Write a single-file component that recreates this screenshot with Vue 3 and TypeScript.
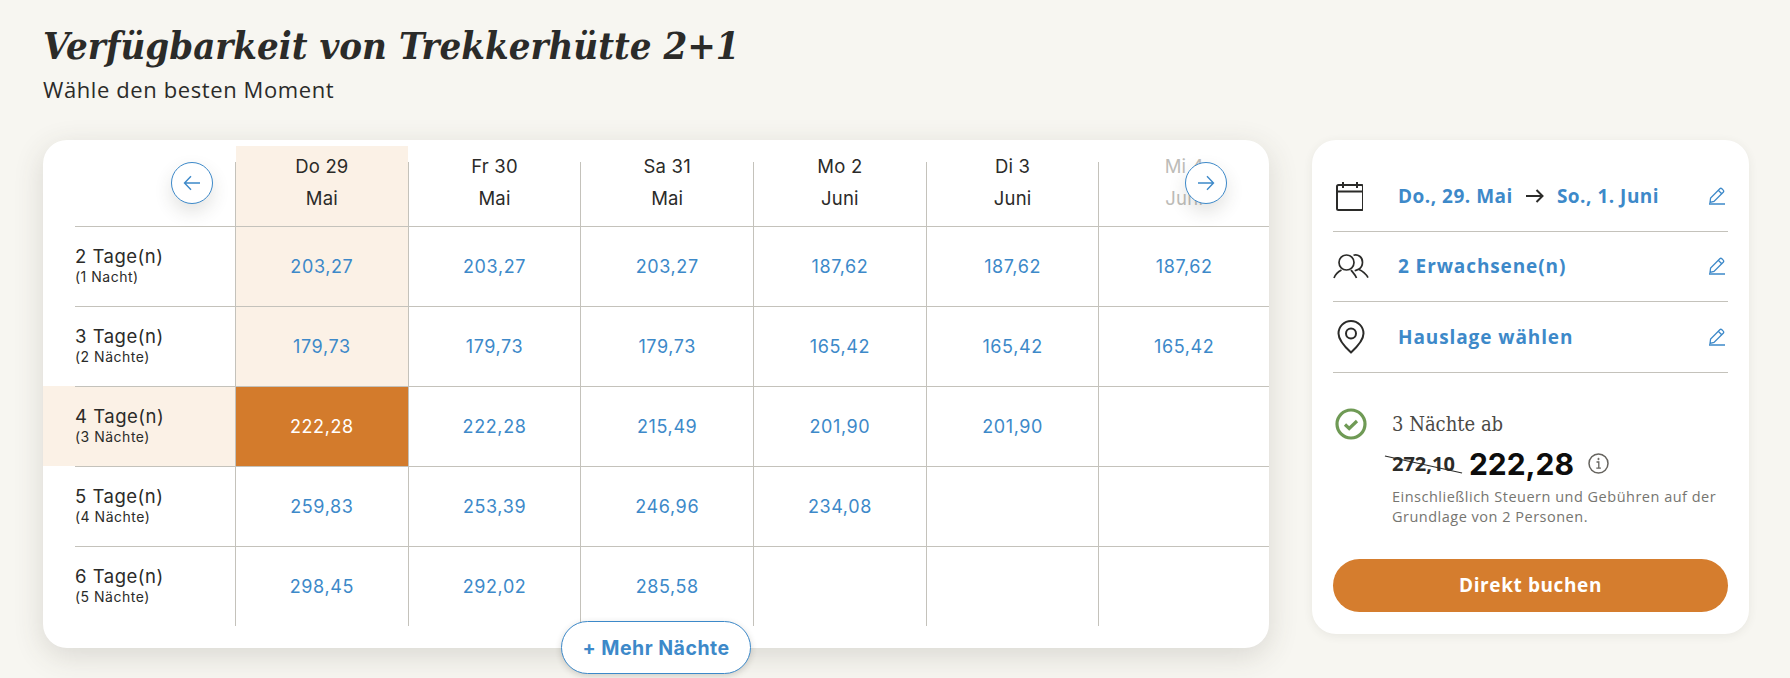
<template>
  <div class="page">
    <header class="page-head">
      <h1>Verfügbarkeit von Trekkerhütte 2+1</h1>
      <p>Wähle den besten Moment</p>
    </header>

    <div class="content">
      <section class="table-card">
        <div class="grid">
          <div class="corner"></div>
          <div
            v-for="(col, i) in columns"
            :key="col.day"
            class="head-cell"
            :class="{ active: i === 0, faded: i === 5 }"
          >
            <span>{{ col.day }}</span>
            <span>{{ col.month }}</span>
          </div>

          <template v-for="(row, r) in rows" :key="row.days">
            <div class="label-cell" :class="{ active: r === 2 }">
              <span class="days">{{ row.days }}</span>
              <span class="nights">{{ row.nights }}</span>
            </div>
            <div
              v-for="c in 6"
              :key="c"
              class="price-cell"
              :class="{ active: c === 1 && r < 2, selected: c === 1 && r === 2 }"
            >
              {{ row.prices[c - 1] }}
            </div>
          </template>
        </div>

        <button class="nav-btn prev" aria-label="Zurück">
          <svg width="18" height="18" viewBox="0 0 18 18" fill="none" stroke="currentColor" stroke-width="1.4">
            <path d="M1.5 9H17M8 2.2 1.5 9 8 15.8" />
          </svg>
        </button>
        <button class="nav-btn next" aria-label="Weiter">
          <svg width="18" height="18" viewBox="0 0 18 18" fill="none" stroke="currentColor" stroke-width="1.4">
            <path d="M16.5 9H1M10 2.2 16.5 9 10 15.8" />
          </svg>
        </button>
        <button class="more-btn">+ Mehr Nächte</button>
      </section>

      <aside class="side-card">
        <div class="side-row">
          <span class="side-icon">
            <svg width="30" height="30" viewBox="0 0 30 30" fill="none" stroke="#2b2b29" stroke-width="2">
              <rect x="4" y="4" width="26" height="25" rx="1.500" />
              <path d="M4 10.500h26M10 1v6M24 1v6" />
            </svg>
          </span>
          <span class="side-text date">Do., 29. Mai</span>
          <svg class="date-arrow" width="18" height="14" viewBox="0 0 18 14" fill="none" stroke="#2b2b29" stroke-width="2">
            <path d="M0 7h16.500M10.500 1l6 6-6 6" />
          </svg>
          <span class="side-text date">So., 1. Juni</span>
          <svg class="pencil" width="18" height="18" viewBox="0 0 18 18" fill="none" stroke="currentColor" stroke-width="1.3">
            <path d="M1 17h16M2 15.500l.6-4.500L11.800 1.800a1.500 1.500 0 0 1 2.100 0l1.300 1.300a1.500 1.500 0 0 1 0 2.100L6 14.500ZM10.300 3.300l3.900 3.900" />
          </svg>
        </div>
        <div class="side-row">
          <span class="side-icon">
            <svg width="36" height="25" viewBox="0 0 36 25" fill="none" stroke="#2b2b29" stroke-width="1.7">
              <circle cx="13.500" cy="8.500" r="7.500" />
              <path d="M1 24c1.500-4 5-6.800 7.500-8M23.500 24c-1.300-3.500-4.500-6.500-5.500-8M20.500 1.200c4.500-1.300 9 1.800 9 7 0 3.500-2 6-4 7 3.500 1.500 7.500 4.500 9.500 8.500M25.500 15.300c-1 .5-2 1-3.800 1.500" />
            </svg>
          </span>
          <span class="side-text">2 Erwachsene(n)</span>
          <svg class="pencil" width="18" height="18" viewBox="0 0 18 18" fill="none" stroke="currentColor" stroke-width="1.3">
            <path d="M1 17h16M2 15.500l.6-4.500L11.800 1.800a1.500 1.500 0 0 1 2.100 0l1.300 1.300a1.500 1.500 0 0 1 0 2.100L6 14.500ZM10.300 3.300l3.900 3.900" />
          </svg>
        </div>
        <div class="side-row">
          <span class="side-icon">
            <svg width="36" height="34" viewBox="0 0 36 34" fill="none" stroke="#2b2b29" stroke-width="2">
              <path d="M18 32.500C12 27 5.500 20 5.500 13.500a12.500 12.500 0 0 1 25 0C30.500 20 24 27 18 32.500Z" />
              <circle cx="18" cy="13.500" r="5" />
            </svg>
          </span>
          <span class="side-text">Hauslage wählen</span>
          <svg class="pencil" width="18" height="18" viewBox="0 0 18 18" fill="none" stroke="currentColor" stroke-width="1.3">
            <path d="M1 17h16M2 15.500l.6-4.500L11.800 1.800a1.500 1.500 0 0 1 2.100 0l1.300 1.300a1.500 1.500 0 0 1 0 2.100L6 14.500ZM10.300 3.300l3.900 3.900" />
          </svg>
        </div>

        <div class="summary">
          <svg class="check" width="32" height="32" viewBox="0 0 32 32" fill="none">
            <circle cx="16" cy="16" r="14" stroke="#6f9a55" stroke-width="3.200" />
            <path d="M10 16.500l4.200 4 7.800-7.500" stroke="#6f9a55" stroke-width="3.200" />
          </svg>
          <div class="summary-body">
            <p class="from">3 Nächte ab</p>
            <div class="price-line">
              <span class="old-price">272,10</span>
              <span class="new-price">222,28</span>
              <svg class="info" width="21" height="21" viewBox="0 0 21 21" fill="none" stroke="#66645f">
                <circle cx="10.500" cy="10.500" r="9.500" stroke-width="1.500" />
                <path d="M8.500 9h2.300v6M8.300 15.200h4.600" stroke-width="1.300" />
                <circle cx="10.500" cy="6" r=".7" fill="#66645f" stroke-width="1" />
              </svg>
            </div>
            <p class="note">Einschließlich Steuern und Gebühren auf der Grundlage von 2 Personen.</p>
          </div>
        </div>

        <button class="book-btn">Direkt buchen</button>
      </aside>
    </div>
  </div>
</template>

<script setup lang="ts">
interface Column {
  day: string
  month: string
}

interface Row {
  days: string
  nights: string
  prices: string[]
}

const columns: Column[] = [
  { day: 'Do 29', month: 'Mai' },
  { day: 'Fr 30', month: 'Mai' },
  { day: 'Sa 31', month: 'Mai' },
  { day: 'Mo 2', month: 'Juni' },
  { day: 'Di 3', month: 'Juni' },
  { day: 'Mi 4', month: 'Juni' }
]

const rows: Row[] = [
  { days: '2 Tage(n)', nights: '(1 Nacht)', prices: ['203,27', '203,27', '203,27', '187,62', '187,62', '187,62'] },
  { days: '3 Tage(n)', nights: '(2 Nächte)', prices: ['179,73', '179,73', '179,73', '165,42', '165,42', '165,42'] },
  { days: '4 Tage(n)', nights: '(3 Nächte)', prices: ['222,28', '222,28', '215,49', '201,90', '201,90'] },
  { days: '5 Tage(n)', nights: '(4 Nächte)', prices: ['259,83', '253,39', '246,96', '234,08'] },
  { days: '6 Tage(n)', nights: '(5 Nächte)', prices: ['298,45', '292,02', '285,58'] }
]
</script>

<style scoped>
.page {
  box-sizing: border-box;
  width: 1790px;
  height: 678px;
  padding: 21px 41px 0 43px;
  background: #f7f6f1;
  color: #2b2b29;
  font-family: "Open Sans", sans-serif;
  overflow: hidden;
}

.page-head h1 {
  margin: 0;
  font-family: "DejaVu Serif Condensed", "DejaVu Serif", serif;
  font-size: 38px;
  font-style: italic;
  font-weight: 700;
  line-height: 50px;
}

.page-head p {
  margin: 4px 0 0;
  font-size: 22px;
  line-height: 28px;
  letter-spacing: 0.6px;
}

.content {
  display: flex;
  align-items: flex-start;
  gap: 43px;
  margin-top: 37px;
}

.table-card {
  position: relative;
  box-sizing: border-box;
  width: 1226px;
  height: 508px;
  padding: 6px 0 22px 32px;
  background: #fff;
  border-radius: 24px;
  box-shadow: 0 8px 30px rgba(70, 65, 50, 0.16);
}

.grid {
  display: grid;
  grid-template-columns: 160px repeat(5, 172.700px) 1fr;
  grid-auto-rows: 80px;
  font-family: Inter, sans-serif;
}

.head-cell {
  position: relative;
  display: flex;
  flex-direction: column;
  align-items: center;
  box-sizing: border-box;
  padding-top: 4px;
  border-left: 1px solid transparent;
  background-clip: padding-box;
  font-size: 18.500px;
  line-height: 32px;
  letter-spacing: 0.2px;
}

.head-cell::before {
  content: "";
  position: absolute;
  top: 16px;
  bottom: 0;
  left: -1px;
  width: 1px;
  background: #c4c2bb;
}

.head-cell.active {
  background-color: #fbf1e6;
}

.head-cell.faded {
  color: #bdbcb8;
}

.label-cell {
  display: flex;
  flex-direction: column;
  justify-content: center;
  box-sizing: border-box;
  padding-bottom: 4px;
  border-top: 1px solid #c4c2bb;
}

.label-cell.active {
  background: #fbf1e6;
  box-shadow: -32px 0 0 #fbf1e6;
}

.days {
  font-size: 18.500px;
  line-height: 23px;
  letter-spacing: 0.5px;
}

.nights {
  font-size: 14px;
  line-height: 17px;
  letter-spacing: 0.5px;
}

.price-cell {
  display: flex;
  align-items: center;
  justify-content: center;
  box-sizing: border-box;
  border-top: 1px solid #c4c2bb;
  border-left: 1px solid #c4c2bb;
  color: #3d89c9;
  font-size: 18px;
  letter-spacing: 0.6px;
}

.price-cell.active {
  background: #fbf1e6;
}

.price-cell.selected {
  background: #d37b2c;
  color: #fff;
}

.nav-btn {
  position: absolute;
  top: 22px;
  display: flex;
  align-items: center;
  justify-content: center;
  width: 42px;
  height: 42px;
  padding: 0;
  background: #fff;
  border: 1px solid #3d89c9;
  border-radius: 50%;
  box-shadow: 0 8px 18px rgba(60, 55, 40, 0.14);
  color: #3d89c9;
}

.nav-btn.prev {
  left: 128px;
}

.nav-btn.next {
  right: 42px;
}

.more-btn {
  position: absolute;
  bottom: -26px;
  left: 518px;
  width: 190px;
  height: 53px;
  padding: 0;
  background: #fff;
  border: 1px solid #3d89c9;
  border-radius: 27px;
  box-shadow: 0 2px 6px rgba(60, 55, 40, 0.2);
  color: #3d89c9;
  font-family: Inter, sans-serif;
  font-size: 19.500px;
  font-weight: 700;
  letter-spacing: 0.5px;
}

.side-card {
  box-sizing: border-box;
  width: 437px;
  height: 494px;
  padding: 21px 21px 22px;
  background: #fff;
  border-radius: 24px;
  box-shadow: 0 2px 10px rgba(70, 65, 50, 0.08);
}

.side-row {
  display: flex;
  align-items: center;
  box-sizing: border-box;
  height: 70.500px;
  border-bottom: 1px solid #c4c2bb;
  color: #3d89c9;
}

.side-icon {
  display: flex;
  flex: none;
  align-items: center;
  width: 65px;
}

.side-text {
  font-size: 19px;
  font-weight: 700;
  letter-spacing: 0.9px;
}

.side-text.date {
  letter-spacing: 0.5px;
}

.date-arrow {
  margin: 0 13px;
}

.pencil {
  margin-left: auto;
  margin-right: 2px;
}

.summary {
  display: flex;
  align-items: flex-start;
  margin-top: 35px;
}

.check {
  flex: none;
  margin: 0 0 0 2px;
}

.summary-body {
  margin-left: 25px;
}

.from {
  margin: 0;
  color: #4a4945;
  font-family: "DejaVu Serif Condensed", "DejaVu Serif", serif;
  font-size: 20px;
  line-height: 32px;
}

.price-line {
  display: flex;
  align-items: center;
  height: 48px;
}

.old-price {
  position: relative;
  font-size: 20px;
  font-weight: 700;
}

.old-price::after {
  content: "";
  position: absolute;
  top: 50%;
  left: -8px;
  width: 79px;
  height: 1px;
  background: #2b2b29;
  transform: rotate(12.500deg);
}

.new-price {
  margin-left: 14px;
  color: #0d0d0d;
  font-family: Inter, sans-serif;
  font-size: 30px;
  font-weight: 700;
}

.info {
  margin-left: 14px;
}

.note {
  margin: -1px 0 0;
  color: #767570;
  font-size: 14.500px;
  line-height: 20.500px;
  letter-spacing: 0.5px;
}

.book-btn {
  display: block;
  width: 100%;
  height: 53px;
  margin-top: 31px;
  background: #d57d2e;
  border: none;
  border-radius: 27px;
  color: #fff;
  font-family: "Open Sans", sans-serif;
  font-size: 19px;
  font-weight: 700;
  letter-spacing: 0.6px;
}
</style>

<style>
html,
body {
  background: #f7f6f1;
}
</style>
